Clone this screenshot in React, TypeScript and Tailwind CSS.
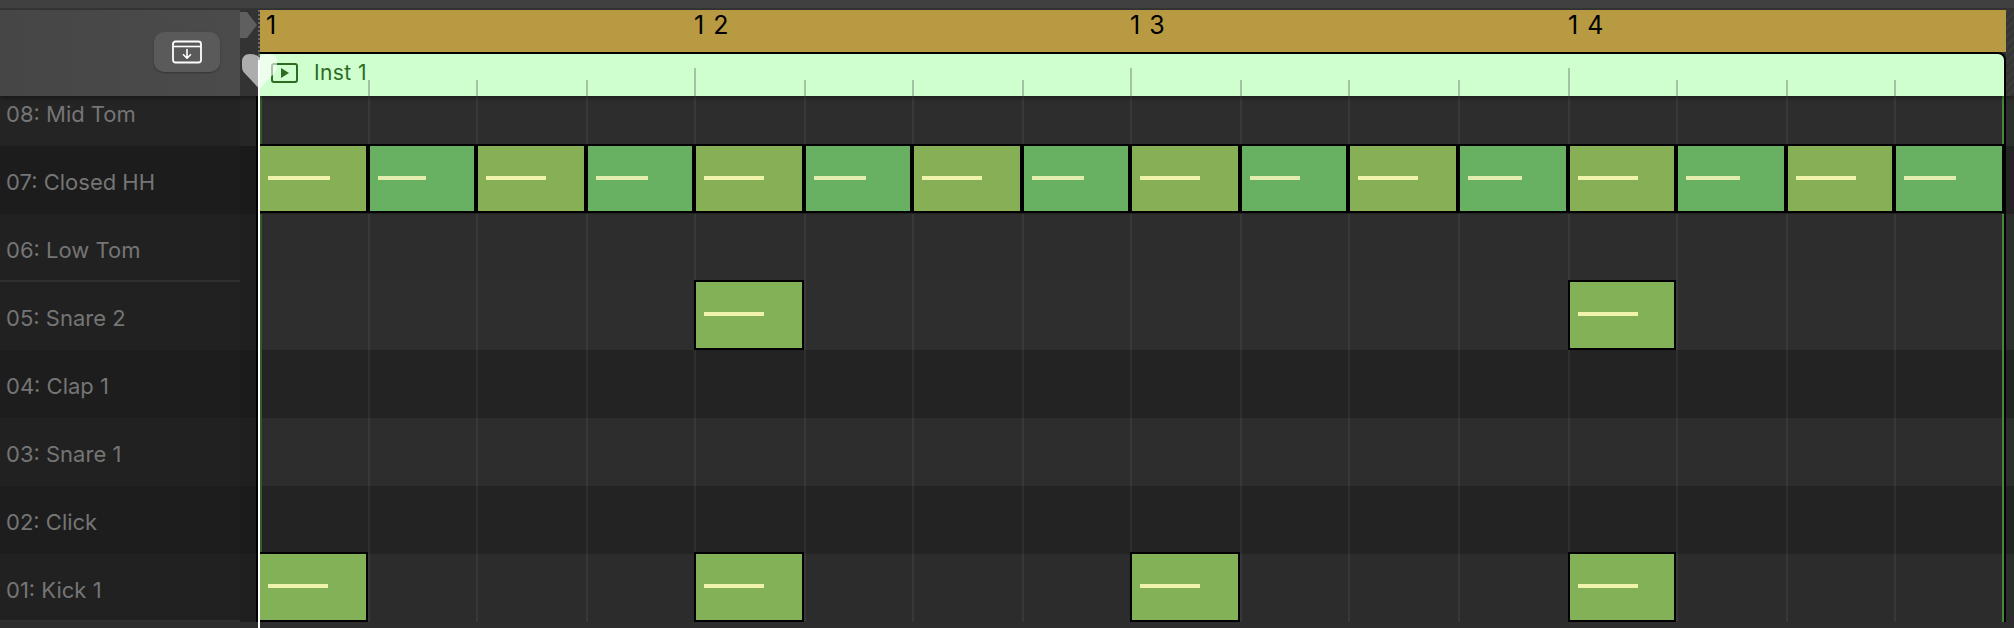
type Note = { bg: string; line: string; width: number }

const OLIVE = 'bg-[#87af56]'
const TEAL = 'bg-[#68b062]'
const PALE = 'bg-[#f1f2ab]'
const PALE_TEAL = 'bg-[#e3eeae]'
const KICK = 'bg-[#83b158]'

const hhWidths = [62, 48, 60, 52, 60, 52, 60, 52, 60, 50, 60, 54, 60, 54, 60, 52]
const hhNotes: Note[] = hhWidths.map((width, i) =>
  i % 2 === 0 ? { bg: OLIVE, line: PALE, width } : { bg: TEAL, line: PALE_TEAL, width },
)
const hit: Note = { bg: KICK, line: PALE, width: 60 }

type Track = {
  name: string
  h: string
  labelBg: string
  gutterBg: string
  gridBg: string
  pt: string
  divider?: boolean
  noteH?: string
  notes: Record<number, Note>
}

const tracks: Track[] = [
  { name: '08: Mid Tom', h: 'h-[50px]', labelBg: 'bg-[#242424]', gutterBg: 'bg-[#262626]', gridBg: 'bg-[#2d2d2d]', pt: 'pt-[6px]', notes: {} },
  {
    name: '07: Closed HH',
    h: 'h-[68px]',
    labelBg: 'bg-[#1c1c1c]',
    gutterBg: 'bg-[#1a1a1a]',
    gridBg: 'bg-[#232323]',
    pt: 'pt-[24px]',
    noteH: 'h-[69px]',
    notes: Object.fromEntries(hhNotes.map((n, i) => [i, n])),
  },
  { name: '06: Low Tom', h: 'h-[68px]', labelBg: 'bg-[#212121]', gutterBg: 'bg-[#1f1f1f]', gridBg: 'bg-[#2d2d2d]', pt: 'pt-[24px]', divider: true, notes: {} },
  { name: '05: Snare 2', h: 'h-[68px]', labelBg: 'bg-[#212121]', gutterBg: 'bg-[#1f1f1f]', gridBg: 'bg-[#2e2e2e]', pt: 'pt-[24px]', notes: { 4: hit, 12: hit } },
  { name: '04: Clap 1', h: 'h-[68px]', labelBg: 'bg-[#1d1d1d]', gutterBg: 'bg-[#1b1b1b]', gridBg: 'bg-[#232323]', pt: 'pt-[24px]', notes: {} },
  { name: '03: Snare 1', h: 'h-[68px]', labelBg: 'bg-[#212121]', gutterBg: 'bg-[#1f1f1f]', gridBg: 'bg-[#2d2d2d]', pt: 'pt-[24px]', notes: {} },
  { name: '02: Click', h: 'h-[68px]', labelBg: 'bg-[#1d1d1d]', gutterBg: 'bg-[#1b1b1b]', gridBg: 'bg-[#232323]', pt: 'pt-[24px]', notes: {} },
  { name: '01: Kick 1', h: 'h-[68px]', labelBg: 'bg-[#212121]', gutterBg: 'bg-[#1f1f1f]', gridBg: 'bg-[#2c2c2c]', pt: 'pt-[24px]', divider: true, notes: { 0: hit, 4: hit, 8: hit, 12: hit } },
]

const steps = Array.from({ length: 16 }, (_, i) => i)

function NoteBlock({ note, h }: { note: Note; h?: string }) {
  return (
    <div className={`-mt-[2px] ${h ?? 'h-[70px]'} border-2 border-black pl-2 pt-[30px] ${note.bg}`}>
      <div className={`h-1 ${note.line}`} style={{ width: note.width }} />
    </div>
  )
}

function TrackRow({ track }: { track: Track }) {
  const rule = track.divider ? 'border-b-2 border-[#2f2f2f]' : ''
  return (
    <div className={`flex ${track.h}`}>
      <div className={`w-[240px] pl-[6px] text-[22px] leading-6 text-[#757575] ${track.pt} ${track.labelBg} ${rule}`}>
        {track.name}
      </div>
      <div className={`w-[18px] border-r-2 border-black ${track.gutterBg}`} />
      <div className={`grid w-[1746px] grid-cols-[110px_108px_110px_108px_110px_108px_110px_108px_110px_108px_110px_110px_108px_110px_108px_110px] ${track.gridBg}`}>
        {steps.map((i) => {
          const note = track.notes[i]
          if (note) return <NoteBlock key={i} note={note} h={track.noteH} />
          const edge = i === 0 ? 'shadow-[inset_4px_0_0_#2f5f27]' : i === 15 ? 'border-l-2 border-white/[0.06] shadow-[inset_-2px_0_0_#47873a]' : 'border-l-2 border-white/[0.06]'
          return <div key={i} className={edge} />
        })}
      </div>
      <div className={`w-[10px] border-l-2 border-black ${track.gridBg}`} />
    </div>
  )
}

function TakeFolderIcon() {
  return (
    <svg width="30" height="24" viewBox="0 0 30 24" fill="none" stroke="white" strokeWidth="1.6">
      <rect x="1" y="1.5" width="28" height="21" rx="2.5" strokeWidth="1.8" />
      <path d="M1 6.5H29" />
      <path d="M15 9.5V18M11.5 14.7 15 18.2 18.5 14.7" strokeLinecap="round" strokeLinejoin="round" />
    </svg>
  )
}

function RulerRegion() {
  return (
    <div className="flex w-[1746px] flex-col">
      <div className="grid h-[42px] grid-cols-[108px_108px_110px_108px_110px_108px_110px_108px_110px_108px_110px_110px_108px_110px_108px_110px] bg-[#b89a43] text-[25px] leading-[28px] text-black">
        <div className="pl-[6px] pt-[1px]">1</div>
        <div />
        <div />
        <div />
        <div className="pt-[1px] tracking-[1px]">1 2</div>
        <div />
        <div />
        <div />
        <div className="pt-[1px] tracking-[1px]">1 3</div>
        <div />
        <div />
        <div />
        <div className="pt-[1px] tracking-[1px]">1 4</div>
      </div>
      <div className="grid h-[44px] grid-cols-[108px_108px_110px_108px_110px_108px_110px_108px_110px_108px_110px_110px_108px_110px_108px_110px] rounded-tr-[8px] border-r-2 border-t-2 border-black bg-[#cfffcf]">
        {steps.map((i) => {
          if (i === 0) {
            return (
              <div key={i} className="flex items-center gap-[16px] pb-[5px] pl-[11px]">
                <div className="flex h-[20px] w-[27px] items-center justify-center rounded-[3px] border-2 border-[#2d6b22]">
                  <div className="h-0 w-0 border-y-[5px] border-l-[8px] border-y-transparent border-l-[#2d6b22]" />
                </div>
                <span className="text-[21px] leading-6 tracking-[0.4px] text-[#2d6b22]">Inst 1</span>
              </div>
            )
          }
          return (
            <div key={i} className="flex items-end">
              <div className={`w-[2px] bg-[#a3c4a3] ${i % 4 === 0 ? 'h-[28px]' : 'h-[16px]'}`} />
            </div>
          )
        })}
      </div>
    </div>
  )
}

export default function App() {
  return (
    <div className="relative h-[628px] w-[2014px] overflow-hidden bg-[#2d2d2d] font-['Inter',sans-serif]">
      <div className="h-[10px] border-b-2 border-[#353535] bg-[#404040]" />

      <div className="relative z-10 flex h-[86px] shadow-[0_2px_4px_rgba(0,0,0,0.35)]">
        <div className="flex w-[240px] items-start justify-end bg-gradient-to-r from-[#464646] to-[#4b4b4b] pr-[20px] pt-[22px]">
          <button className="flex h-[40px] w-[66px] items-center justify-center rounded-[10px] bg-[#5a5a5a] shadow-[0_1px_2px_rgba(0,0,0,0.3)]">
            <TakeFolderIcon />
          </button>
        </div>
        <div className="w-[20px] border-r-2 border-dotted border-[#6a6a6a] bg-[#333333] pt-[2px]">
          <svg width="17" height="26" viewBox="0 0 17 26" className="block">
            <path d="M0 0H7L17 13 7 26H0Z" fill="#5f5f5f" />
          </svg>
        </div>
        <RulerRegion />
        <div className="w-[8px] bg-[repeating-linear-gradient(135deg,#3a3a3a_0px,#3a3a3a_3px,#343434_3px,#343434_6px)]" />
      </div>

      {tracks.map((t) => (
        <TrackRow key={t.name} track={t} />
      ))}

      {/* playhead: translucent shield over the region plus the white line down the page */}
      <svg width="35" height="35" viewBox="0 0 36 36" className="absolute left-[242px] top-[54px] z-20">
        <path d="M0 8C0 3 3 0 8 0C12 0 15 1 18 3C21 1 24 0 28 0C33 0 36 3 36 8V13C36 16 35 18 33 20L18 36 3 20C1 18 0 16 0 13Z" fill="white" fillOpacity="0.6" />
      </svg>
      <div className="absolute bottom-0 left-[258px] top-[60px] z-20 w-[2px] bg-white" />
    </div>
  )
}
